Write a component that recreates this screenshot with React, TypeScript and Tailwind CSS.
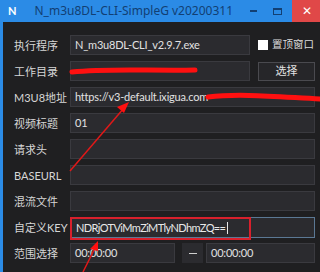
import React from 'react';

const font = { fontFamily: 'Lato, "Noto Sans CJK SC", sans-serif' };

function Field({ children, className = '' }: { children?: React.ReactNode; className?: string }) {
  return (
    <div
      className={`h-[20px] flex items-center px-[4px] bg-[#2b2b2f] border border-[#3a3a3f] text-[11px] tracking-[-0.2px] text-[#e2e2e2] whitespace-nowrap overflow-hidden ${className}`}
    >
      {children}
    </div>
  );
}

function Row({ label, children }: { label: string; children: React.ReactNode }) {
  return (
    <div className="flex items-center h-[20px]">
      <div className="w-[56px] shrink-0 text-[11px] text-[#d6d6d6] leading-none whitespace-nowrap">{label}</div>
      <div className="flex-1 flex items-center gap-[8px]">{children}</div>
    </div>
  );
}

export default function App() {
  return (
    <div className="relative w-[320px] h-[272px] overflow-hidden bg-[#2b8be6] flex flex-col" style={font}>
      {/* title bar */}
      <div className="h-[22px] shrink-0 flex items-center text-[#123f73]">
        <span className="ml-[8px] text-[11px] font-bold text-white">N</span>
        <span className="ml-[18px] text-[12px] whitespace-nowrap" style={{ fontFamily: '"Noto Sans", sans-serif' }}>
          N_m3u8DL-CLI-SimpleG v20200311
        </span>
        <span className="ml-auto mr-[16px] w-[7px] h-[2px] bg-[#123f73]" />
        <span className="mr-[10px] w-[9px] h-[7px] border border-[#123f73] border-t-2" />
        <span className="w-[30px] h-[22px] bg-[#e04848] flex items-center justify-center text-white text-[12px] -mr-[2px]">✕</span>
      </div>

      {/* body */}
      <div className="flex-1 ml-[3px] bg-[#1f1f21] pt-[13px] pl-[11px] pr-[5px] flex flex-col gap-[6px]">
        <Row label="执行程序">
          <Field className="w-[180px]">N_m3u8DL-CLI_v2.9.7.exe</Field>
          <div className="flex items-center gap-[4px] text-[10.5px] text-[#dcdcdc] whitespace-nowrap">
            <span className="w-[10px] h-[10px] bg-white shrink-0" />
            置顶窗口
          </div>
        </Row>
        <Row label="工作目录">
          <Field className="w-[180px]" />
          <div className="w-[57px] h-[19px] border border-[#4a4a4f] bg-[#262629] flex items-center justify-center text-[11px] text-[#e2e2e2]">
            选择
          </div>
        </Row>
        <Row label="M3U8地址">
          <Field className="flex-1">https://v3-default.ixigua.com</Field>
        </Row>
        <Row label="视频标题">
          <Field className="flex-1">01</Field>
        </Row>
        <Row label="请求头">
          <Field className="flex-1" />
        </Row>
        <Row label="BASEURL">
          <Field className="flex-1" />
        </Row>
        <Row label="混流文件">
          <Field className="flex-1" />
        </Row>
        <Row label="自定义KEY">
          <div className="flex-1 h-[21px] border border-[#5b7894] bg-[#2b2b2f] flex">
            <div className="w-[181px] -ml-px -my-px h-[23px] border-2 border-[#d8202c] flex items-center px-[4px] text-[11px] tracking-[-0.6px] text-[#e8e8e8] whitespace-nowrap">
              NDRjOTViMmZiMTlyNDhmZQ==
              <span className="w-px h-[12px] bg-[#e8e8e8] ml-[2px]" />
            </div>
          </div>
        </Row>
        <Row label="范围选择">
          <div className="flex-1 flex items-center">
            <Field className="w-[105px]">00:00:00</Field>
            <div className="w-[21px] h-[20px] ml-[7px] bg-[#2b2b2f] flex items-center justify-center">
              <span className="w-[8px] h-px bg-[#cfcfcf]" />
            </div>
            <Field className="flex-1 ml-[3px]">00:00:00</Field>
          </div>
        </Row>
      </div>

      {/* annotation marks */}
      <svg className="absolute inset-0 pointer-events-none" width="320" height="272" viewBox="0 0 320 272">
        <path d="M72 72 C 110 68, 150 71, 195 70" stroke="#ff1010" strokeWidth="5" fill="none" strokeLinecap="round" />
        <path d="M208 97 C 240 93, 280 97, 320 99" stroke="#ff1010" strokeWidth="5" fill="none" strokeLinecap="round" />
        <line x1="70" y1="171" x2="124" y2="108" stroke="#e01818" strokeWidth="1.5" />
        <polygon points="129,102 117,107 124,113" fill="#ff1010" />
        <line x1="83" y1="272" x2="95" y2="248" stroke="#e01818" strokeWidth="1.5" />
        <polygon points="98,241 90,249 98,251" fill="#ff1010" />
      </svg>
    </div>
  );
}
